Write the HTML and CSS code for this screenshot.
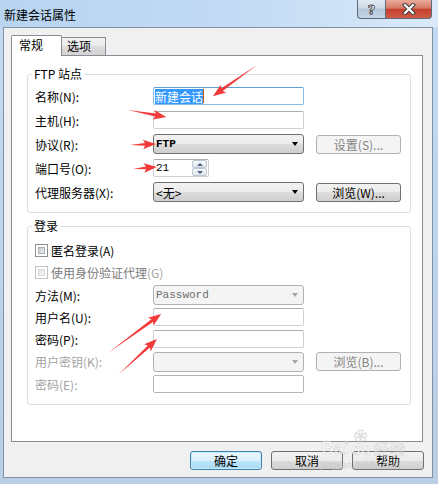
FILE: index.html
```html
<!DOCTYPE html>
<html lang="zh-CN">
<head>
    <meta charset="UTF-8">
    <meta name="viewport" content="width=device-width, initial-scale=1.0">
    <title>新建会话属性</title>
    <link rel="stylesheet" href="styles.css">
</head>
<body>
<div class="window">
    <div class="titlebar">
        <span class="title">新建会话属性</span>
        <div class="caption">
            <span class="cap-btn cap-help">?</span>
            <span class="cap-btn cap-close">
                <svg width="14" height="12" viewBox="0 0 14 12">
                    <path d="M3 2 L11 10 M11 2 L3 10" stroke="#3b3b3b" stroke-width="4.2" stroke-linecap="square"/>
                    <path d="M3 2 L11 10 M11 2 L3 10" stroke="#fff" stroke-width="2.2" stroke-linecap="square"/>
                </svg>
            </span>
        </div>
    </div>

    <div class="client">
        <div class="tabs">
            <div class="tab active">常规</div>
            <div class="tab">选项</div>
        </div>

        <div class="panel">
            <fieldset class="group site">
                <legend>FTP 站点</legend>
                <div class="row">
                    <span class="lbl">名称(N):</span>
                    <div class="textbox focused"><span class="selected">新建会话</span><span class="caret"></span></div>
                </div>
                <div class="row">
                    <span class="lbl">主机(H):</span>
                    <div class="textbox"></div>
                </div>
                <div class="row">
                    <span class="lbl">协议(R):</span>
                    <div class="combo"><span class="mono bold">FTP</span><i class="arrow"></i></div>
                    <div class="btn side disabled">设置(S)...</div>
                </div>
                <div class="row">
                    <span class="lbl">端口号(O):</span>
                    <div class="textbox spin">
                        <span class="mono">21</span>
                        <div class="spin-btns"><i class="up"></i><i class="down"></i></div>
                    </div>
                </div>
                <div class="row">
                    <span class="lbl">代理服务器(X):</span>
                    <div class="combo"><span>&lt;无&gt;</span><i class="arrow"></i></div>
                    <div class="btn side">浏览(W)...</div>
                </div>
            </fieldset>

            <fieldset class="group login">
                <legend>登录</legend>
                <div class="row r22">
                    <span class="check"></span><span>匿名登录(A)</span>
                </div>
                <div class="row r23">
                    <span class="check disabled"></span><span class="dim">使用身份验证代理<span class="dimmer">(G)</span></span>
                </div>
                <div class="row r22">
                    <span class="lbl">方法(M):</span>
                    <div class="combo disabled"><span class="mono">Password</span><i class="arrow"></i></div>
                </div>
                <div class="row r22">
                    <span class="lbl">用户名(U):</span>
                    <div class="textbox"></div>
                </div>
                <div class="row r22">
                    <span class="lbl">密码(P):</span>
                    <div class="textbox"></div>
                </div>
                <div class="row r23">
                    <span class="lbl dimmer">用户密钥(K):</span>
                    <div class="combo disabled"><span></span><i class="arrow"></i></div>
                    <div class="btn side disabled">浏览(B)...</div>
                </div>
                <div class="row r22">
                    <span class="lbl dimmer">密码(E):</span>
                    <div class="textbox grey"></div>
                </div>
            </fieldset>
        </div>

        <div class="dlg-buttons">
            <div class="btn dlg default">确定</div>
            <div class="btn dlg">取消</div>
            <div class="btn dlg">帮助</div>
        </div>
    </div>

    <div class="watermark">
        <div class="wm-line"><span class="wm-big">Bai</span><span class="wm-du"><span class="paw">&#10047;</span>du</span><span class="wm-cn">经验</span></div>
        <div class="wm-url">jingyan.baidu.com</div>
    </div>

    <svg class="marks" width="438" height="484" viewBox="0 0 438 484">
        <g fill="#f23a3a">
            <polygon transform="translate(257 65) rotate(144.8)" points="0,0 43,-1.5 41,-4.8 54,0 41,4.8 43,1.5"/>
            <polygon transform="translate(128 110) rotate(10.4)" points="0,0 28,-1.5 26,-4.8 39,0 26,4.8 28,1.5"/>
            <polygon transform="translate(130 145) rotate(-2.2)" points="0,0 15,-1.4 13,-4.8 26,0 13,4.8 15,1.4"/>
            <polygon transform="translate(133 169) rotate(-4.8)" points="0,0 13,-1.4 11,-4.8 24,0 11,4.8 13,1.4"/>
            <polygon transform="translate(108 353) rotate(-36.3)" points="0,0 55,-1.5 53,-4.8 66,0 53,4.8 55,1.5"/>
            <polygon transform="translate(118 375) rotate(-42.7)" points="0,0 42,-1.5 40,-4.8 53,0 40,4.8 42,1.5"/>
        </g>
    </svg>
</div>
</body>
</html>
```

FILE: styles.css
```css
body {
    margin: 0;
    background-color: #c4d9ef;
    color: #000;
    font-family: "Noto Sans CJK SC", "Noto Sans", sans-serif;
    font-size: 12px;
}

.window {
    position: relative;
    width: 438px;
    height: 484px;
    overflow: hidden;
    background: linear-gradient(#c4daf2, #b9cee5);
}

/* title bar */
.titlebar {
    height: 27px;
    display: flex;
    justify-content: space-between;
    align-items: flex-start;
    background: linear-gradient(to right, #b7d4f1, #c3dbf4 55%, #d9e9f8);
}

.title {
    padding: 8px 0 0 4px;
    line-height: 14px;
}

.caption {
    display: flex;
    margin-right: 6px;
}

.cap-btn {
    height: 19px;
    box-sizing: border-box;
    border: 1px solid #5b6b7d;
    border-top: 0;
    display: flex;
    align-items: center;
    justify-content: center;
}

.cap-help {
    width: 28px;
    border-right: 0;
    border-radius: 0 0 0 4px;
    background: linear-gradient(#e1e9f2, #cdd9e6 45%, #b4c5d8 50%, #c7d6e6);
    color: #fff;
    font: bold 13px "DejaVu Sans", sans-serif;
    -webkit-text-stroke: 0.8px #3a3a3a;
}

.cap-close {
    width: 47px;
    border-radius: 0 0 4px 0;
    background: linear-gradient(#eaab9d, #d77a68 45%, #c4412c 52%, #d15c48);
}

/* client area */
.client {
    margin-left: 3px;
    width: 430px;
    height: 451px;
    box-sizing: border-box;
    border: 1px solid #8192a4;
    background-color: #f0f0f0;
    padding: 7px 8px 0 7px;
}

.tabs {
    display: flex;
    align-items: flex-end;
    height: 20px;
}

.tab {
    box-sizing: border-box;
    border: 1px solid #898c95;
    border-bottom: 0;
    line-height: 14px;
}

.tab.active {
    width: 51px;
    height: 21px;
    margin-bottom: -1px;
    padding: 2px 0 0 7px;
    background-color: #fff;
    border-radius: 2px 2px 0 0;
    position: relative;
    z-index: 1;
}

.tab:not(.active) {
    width: 44px;
    height: 18px;
    border-left: 0;
    padding: 1px 0 0 5px;
    background: linear-gradient(#f3f3f3, #ebebeb 50%, #dddddd 50%, #d3d3d3);
}

.panel {
    width: 412px;
    height: 387px;
    box-sizing: border-box;
    border: 1px solid #898c95;
    background-color: #fff;
    padding: 11px 11px 0 15px;
}

/* group boxes */
.group {
    width: 384px;
    box-sizing: border-box;
    margin: 0;
    border: 1px solid #d5dfe5;
    border-radius: 3px;
    padding: 3px 0 8px 7px;
    min-inline-size: 0;
}

.group legend {
    padding: 0 2px;
    margin-left: -3px;
    line-height: 14px;
}

.group.login {
    margin-top: 6px;
    padding: 6px 0 9px 7px;
}

.row {
    display: flex;
    align-items: center;
    height: 24px;
}

.row.r22 {
    height: 22px;
}

.row.r23 {
    height: 23px;
}

.lbl {
    width: 118px;
    flex-shrink: 0;
}

.dim {
    color: #7a7a7a;
}

.dimmer {
    color: #a3a3a3;
}

.mono {
    font-family: "Liberation Mono", monospace;
    font-size: 11px;
}

.bold {
    font-weight: bold;
}

/* text boxes */
.textbox {
    width: 151px;
    height: 18px;
    box-sizing: border-box;
    border: 1px solid #cdd1d8;
    border-top-color: #abadb3;
    border-radius: 2px;
    background-color: #fff;
    display: flex;
    align-items: center;
    padding-left: 1px;
}

.textbox.focused {
    border-color: #8bbbe8;
    border-top-color: #5f9fdc;
}

.textbox.grey {
    border-color: #b5b5b5;
}

.selected {
    background-color: #3399ff;
    color: #fff;
    line-height: 15px;
}

.caret {
    width: 1px;
    height: 14px;
    background-color: #c25d0a;
}

.spin {
    width: 56px;
    padding-left: 2px;
}

.spin-btns {
    margin-left: auto;
    margin-right: 1px;
    width: 15px;
    height: 16px;
    display: flex;
    flex-direction: column;
}

.spin-btns i {
    flex: 1;
    box-sizing: border-box;
    border: 1px solid #bcc5d0;
    border-radius: 2px;
    background: linear-gradient(#f7f8fa, #e3e8ee);
    display: flex;
    align-items: center;
    justify-content: center;
}

.spin-btns i::after {
    content: "";
    border-left: 3px solid transparent;
    border-right: 3px solid transparent;
}

.spin-btns .up::after {
    border-bottom: 3px solid #4b5f86;
}

.spin-btns .down::after {
    border-top: 3px solid #4b5f86;
}

/* combo boxes */
.combo {
    width: 151px;
    height: 20px;
    box-sizing: border-box;
    border: 1px solid #707070;
    border-radius: 3px;
    background: linear-gradient(#f2f2f2, #ebebeb 50%, #dddddd 50%, #cfcfcf);
    display: flex;
    align-items: center;
    justify-content: space-between;
    padding: 0 5px 0 2px;
}

.combo .arrow {
    border-left: 3.5px solid transparent;
    border-right: 3.5px solid transparent;
    border-top: 4px solid #000;
}

.combo.disabled {
    border-color: #adb2b5;
    background: #f4f4f4;
    color: #6d6d6d;
}

.combo.disabled .arrow {
    border-top-color: #a5a5a5;
}

/* buttons */
.btn {
    box-sizing: border-box;
    height: 19px;
    border: 1px solid #707070;
    border-radius: 3px;
    background: linear-gradient(#f2f2f2, #ebebeb 50%, #dddddd 50%, #cfcfcf);
    text-align: center;
    line-height: 17px;
}

.btn.side {
    width: 85px;
    margin-left: 12px;
}

.btn.disabled {
    border-color: #adb2b5;
    background: #f4f4f4;
    color: #838383;
}

.btn.default {
    border-color: #3c7fb1;
    background: linear-gradient(#eaf6fd, #d9f0fc 50%, #bee6fd 50%, #a7d9f5);
    box-shadow: inset 0 0 0 1px #c8ebfd;
}

.dlg-buttons {
    display: flex;
    justify-content: flex-end;
    margin-top: 9px;
}

.btn.dlg {
    width: 72px;
    margin-left: 9px;
}

/* checkboxes */
.check {
    width: 13px;
    height: 13px;
    box-sizing: border-box;
    border: 1px solid #8e8f8f;
    background-color: #fff;
    padding: 2px;
    margin-right: 3px;
    flex-shrink: 0;
}

.check::after {
    content: "";
    display: block;
    width: 7px;
    height: 7px;
    box-sizing: border-box;
    border: 1px solid #a9aeb4;
    background: linear-gradient(135deg, #c4c9cf, #eef0f2);
}

.check.disabled {
    border-color: #c3c3c3;
}

.check.disabled::after {
    border-color: #d9d9d9;
    background: linear-gradient(135deg, #e6e6e6, #f6f6f6);
}

/* overlays */
.marks {
    position: absolute;
    left: 0;
    top: 0;
    pointer-events: none;
}

.watermark {
    position: absolute;
    left: 321px;
    top: 430px;
    white-space: nowrap;
    pointer-events: none;
    color: rgba(255, 255, 255, 0.5);
    -webkit-text-stroke: 0.6px rgba(140, 140, 140, 0.3);
    font-family: "Liberation Sans", sans-serif;
}

.wm-line {
    display: flex;
    align-items: flex-end;
    height: 27px;
}

.wm-big {
    font-size: 18px;
    font-weight: bold;
    line-height: 18px;
}

.wm-du {
    display: flex;
    flex-direction: column;
    align-items: center;
    font-size: 16px;
    font-weight: bold;
    line-height: 14px;
    margin-left: 2px;
}

.paw {
    font-size: 13px;
    line-height: 13px;
}

.wm-cn {
    font-family: "Noto Sans CJK SC", sans-serif;
    font-size: 16px;
    line-height: 18px;
    margin-left: 3px;
}

.wm-url {
    font-size: 9px;
    line-height: 11px;
    margin-top: 3px;
    letter-spacing: 0.4px;
}
```
